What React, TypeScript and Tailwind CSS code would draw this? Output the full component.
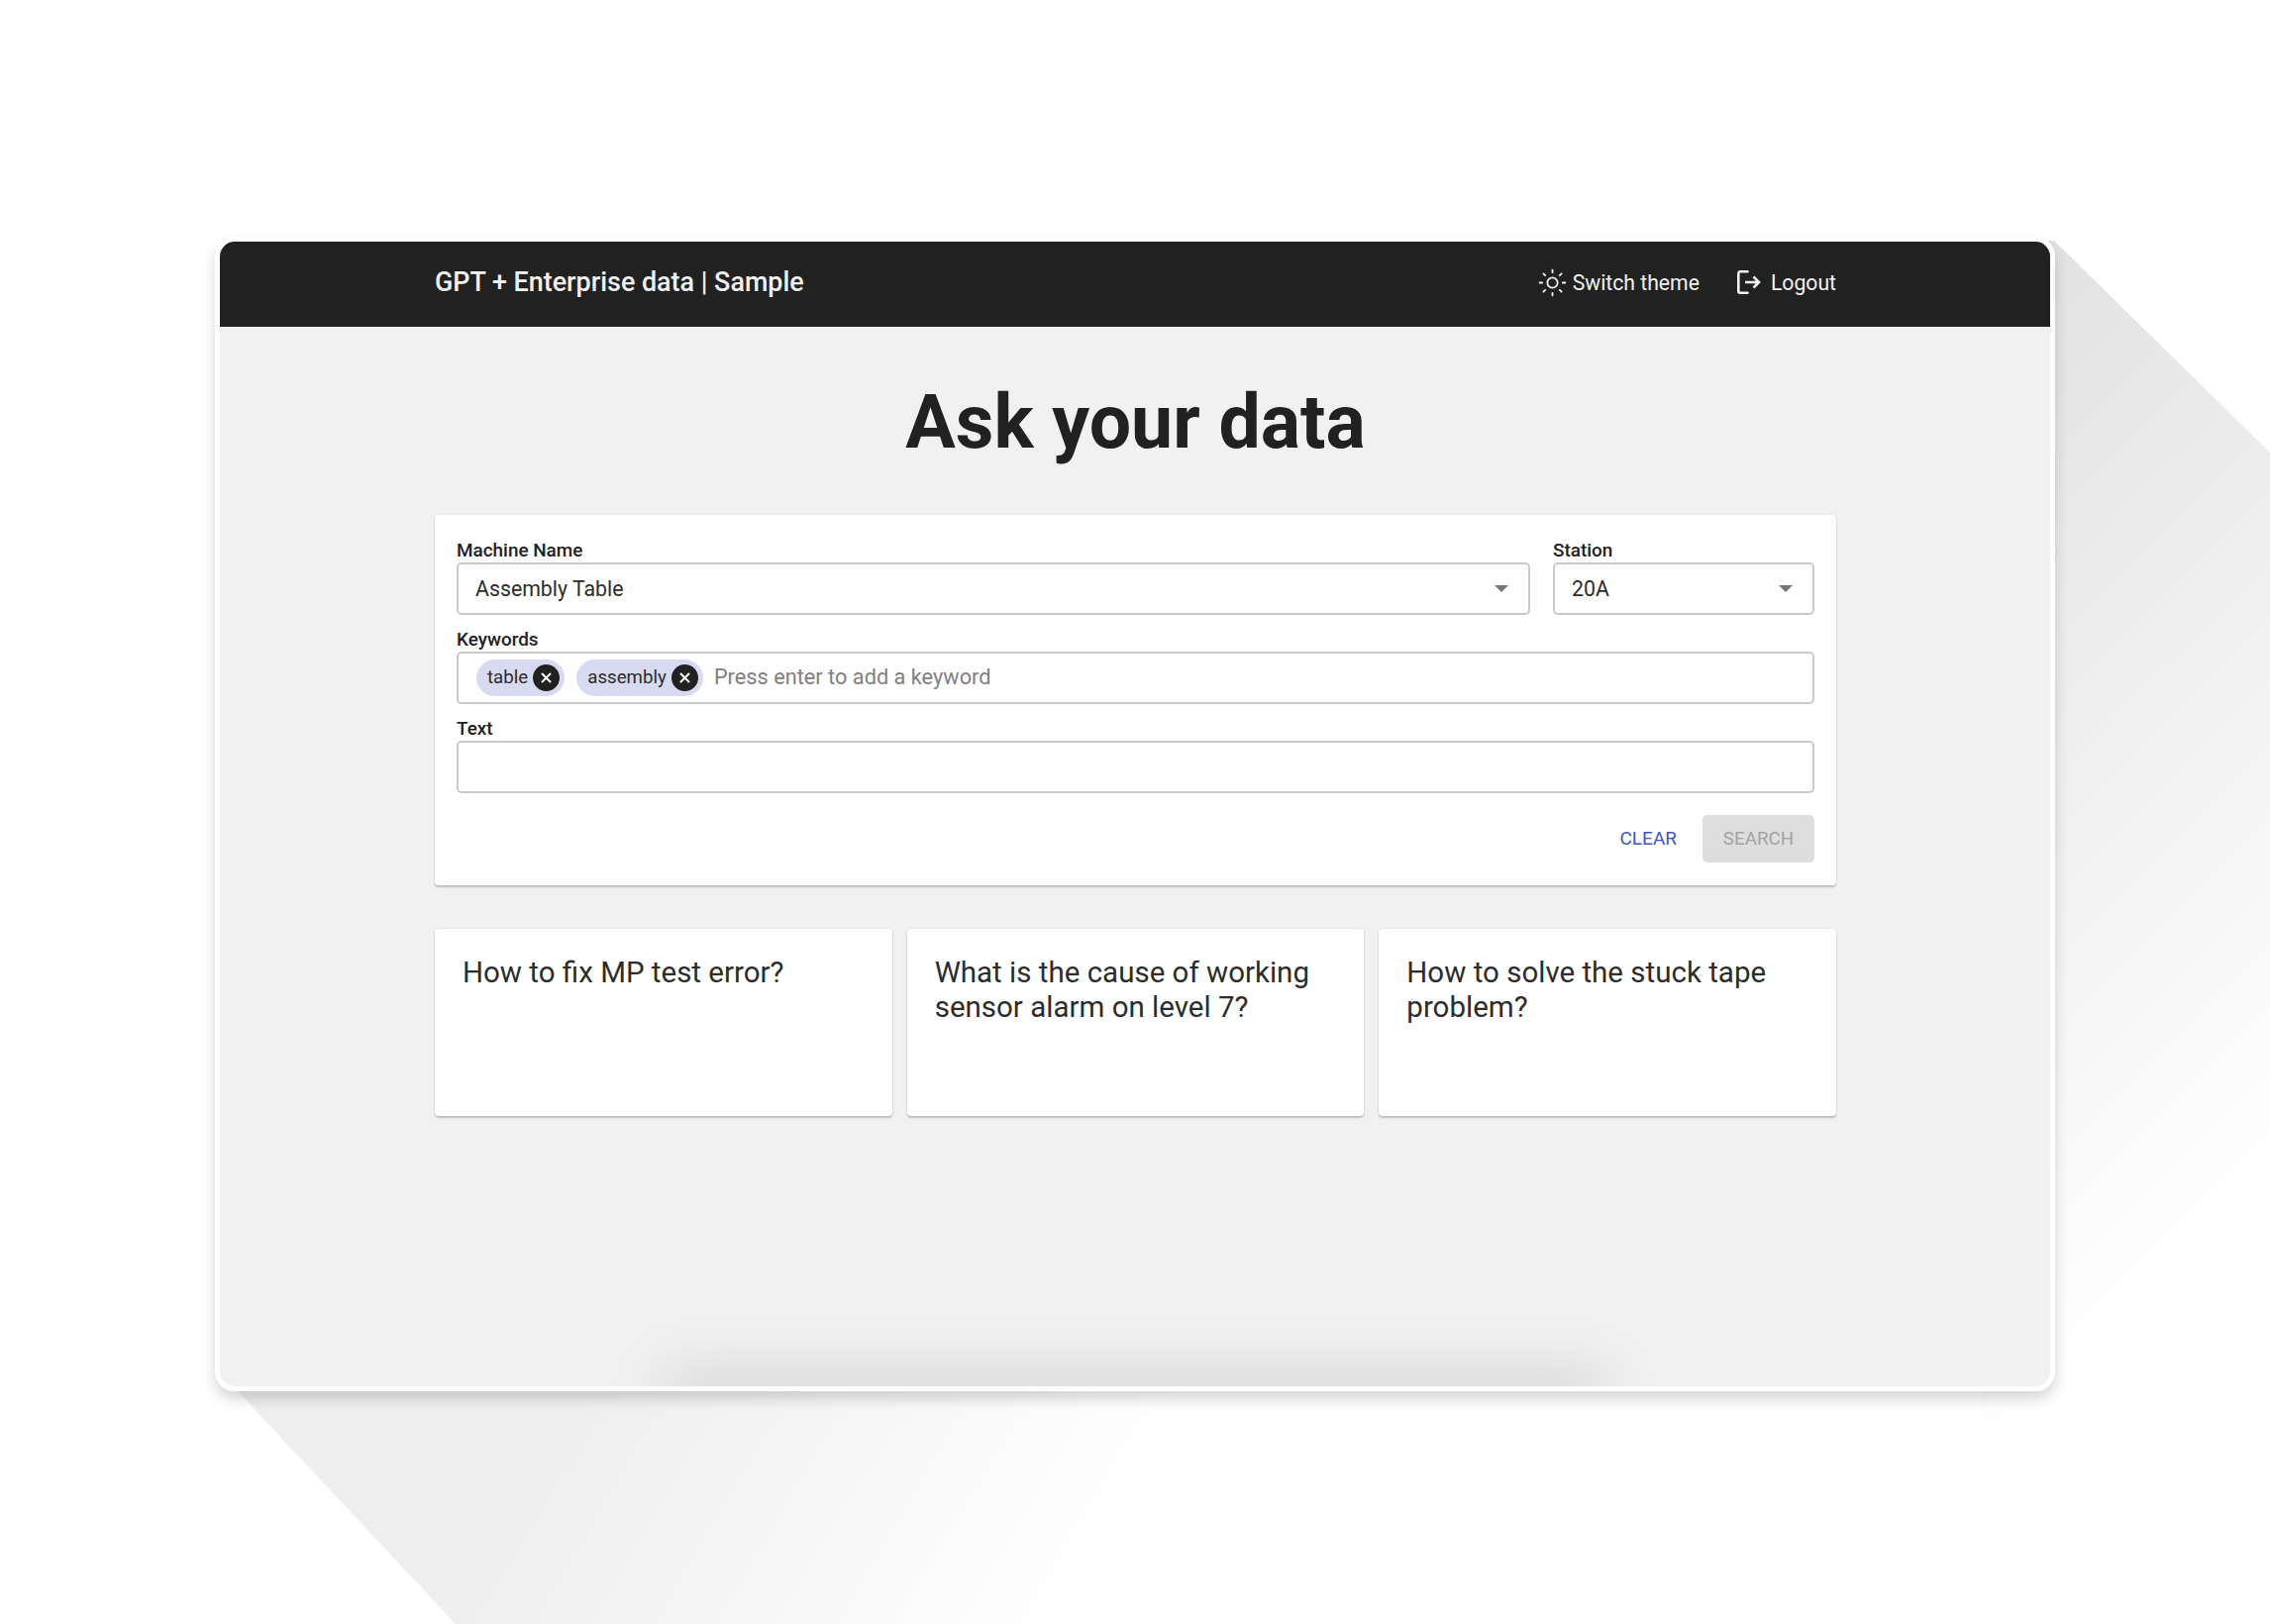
import React from 'react';
import { Sun } from 'lucide-react';

const font = "font-['Roboto','Liberation_Sans',sans-serif]";

const cards = [
  'How to fix MP test error?',
  'What is the cause of working sensor alarm on level 7?',
  'How to solve the stuck tape problem?',
];

const Caret = () => (
  <svg width="14" height="7" viewBox="0 0 14 7" className="shrink-0">
    <path d="M0 0h14L7 7z" fill="#757575" />
  </svg>
);

const LogoutIcon = () => (
  <svg width="24" height="24" viewBox="0 0 24 24" fill="none" stroke="#f1f1f1" strokeWidth="2.6">
    <path d="M10.500 1.300H3a1.700 1.700 0 0 0-1.700 1.700v18a1.700 1.700 0 0 0 1.700 1.700h7.500" strokeLinecap="round" />
    <path d="M8 12h14M16.500 6.500 22 12l-5.500 5.500" />
  </svg>
);

const Chip = ({ label }: { label: string }) => (
  <div className="flex h-[37px] items-center rounded-full bg-[#d7daf0] pl-[11px] pr-[5px] text-[18.700px] text-[#2c2c2c]">
    <span className="mr-[5px]">{label}</span>
    <span className="flex h-[27px] w-[27px] items-center justify-center rounded-full bg-[#212121]">
      <svg width="13" height="13" viewBox="0 0 13 13" stroke="#fff" strokeWidth="2" strokeLinecap="round">
        <path d="M2.500 2.500l8 8M10.500 2.500l-8 8" />
      </svg>
    </span>
  </div>
);

const Field = ({ label, className, children }: { label: string; className?: string; children?: React.ReactNode }) => (
  <div className={className}>
    <div className="h-[26px] text-[18.900px] leading-[28px] font-medium text-[#212121]">{label}</div>
    <div className="flex h-[53px] items-center rounded-[5px] border-2 border-[#c9c9c9] bg-white">{children}</div>
  </div>
);

export default function App() {
  return (
    <div className={`relative h-[1640px] w-[2292px] overflow-hidden bg-white pl-[217px] pt-[239px] ${font}`}>
      {/* long shadow behind the window */}
      <svg className="absolute left-0 top-0" width="2292" height="1640" viewBox="0 0 2292 1640">
        <defs>
          <linearGradient id="fadeRight" gradientUnits="userSpaceOnUse" x1="1900" y1="420" x2="2480" y2="1000">
            <stop offset="0" stopColor="#e2e2e2" />
            <stop offset="1" stopColor="#ffffff" />
          </linearGradient>
          <linearGradient id="fadeBottom" gradientUnits="userSpaceOnUse" x1="800" y1="1000" x2="1280" y2="1280">
            <stop offset="0" stopColor="#eeeeee" />
            <stop offset="1" stopColor="#ffffff" />
          </linearGradient>
        </defs>
        <polygon points="2074,243 2292,457 2292,1640 2000,1640 2000,243" fill="url(#fadeRight)" />
        <polygon points="240,1405 1400,1405 1400,1640 460,1640" fill="url(#fadeBottom)" />
      </svg>

      <div className="relative flex h-[1166px] w-[1858px] flex-col overflow-hidden rounded-[20px] border-[5px] border-white bg-[#f1f1f1] shadow-[0_8px_14px_rgba(0,0,0,0.16)]">
        <header className="flex h-[86px] shrink-0 items-center justify-between bg-[#212121] pb-[3px] pl-[217px] pr-[216px] text-[#f1f1f1]">
          <div className="text-[26.900px] font-medium">GPT + Enterprise data | Sample</div>
          <div className="flex items-center text-[21.200px]">
            <Sun size={31} strokeWidth={1.4} className="mr-[5px]" />
            <span>Switch theme</span>
            <span className="ml-[38px] mr-[10px] flex">
              <LogoutIcon />
            </span>
            <span>Logout</span>
          </div>
        </header>

        <main className="flex-1 pl-[217px] pr-[216px]">
          <h1 className="mt-[54px] h-[84px] text-center text-[75.200px] leading-[84px] font-bold text-[#212121]">Ask your data</h1>

          <section className="mt-[52px] h-[374px] rounded-[4px] bg-white px-[22px] pt-[22px] shadow-[0_2px_2px_rgba(0,0,0,0.2),0_0_2px_rgba(0,0,0,0.12)]">
            <div className="flex gap-[23px]">
              <Field label="Machine Name" className="flex-1">
                <div className="flex w-full items-center justify-between pl-[17px] pr-[20px] text-[21.300px] text-[#2c2c2c]">
                  <span>Assembly Table</span>
                  <Caret />
                </div>
              </Field>
              <Field label="Station" className="w-[264px]">
                <div className="flex w-full items-center justify-between pl-[17px] pr-[20px] text-[21.300px] text-[#2c2c2c]">
                  <span>20A</span>
                  <Caret />
                </div>
              </Field>
            </div>

            <Field label="Keywords" className="mt-[11px]">
              <div className="flex items-center gap-[12px] pl-[18px]">
                <Chip label="table" />
                <Chip label="assembly" />
              </div>
              <span className="ml-[11px] text-[21.750px] text-[#808080]">Press enter to add a keyword</span>
            </Field>

            <Field label="Text" className="mt-[11px]" />

            <div className="mt-[22px] flex items-center justify-end">
              <button className="mr-[26px] text-[19px] text-[#4456bd]">CLEAR</button>
              <button className="h-[48px] w-[113px] rounded-[5px] bg-[#dedede] text-[18.800px] text-[#a3a3a3]">SEARCH</button>
            </div>
          </section>

          <div className="mt-[44px] grid grid-cols-3 gap-[15px]">
            {cards.map((text) => (
              <div
                key={text}
                className="h-[189px] rounded-[4px] bg-white px-[28px] pt-[27px] text-[29.500px] leading-[35px] text-[#2c2c2c] shadow-[0_2px_2px_rgba(0,0,0,0.2),0_0_2px_rgba(0,0,0,0.12)]"
              >
                {text}
              </div>
            ))}
          </div>
        </main>

        {/* soft shadow rising from the lower edge */}
        <div className="absolute left-[458px] top-full h-[10px] w-[930px] shadow-[0_0_60px_10px_rgba(0,0,0,0.17)]" />
      </div>
    </div>
  );
}
